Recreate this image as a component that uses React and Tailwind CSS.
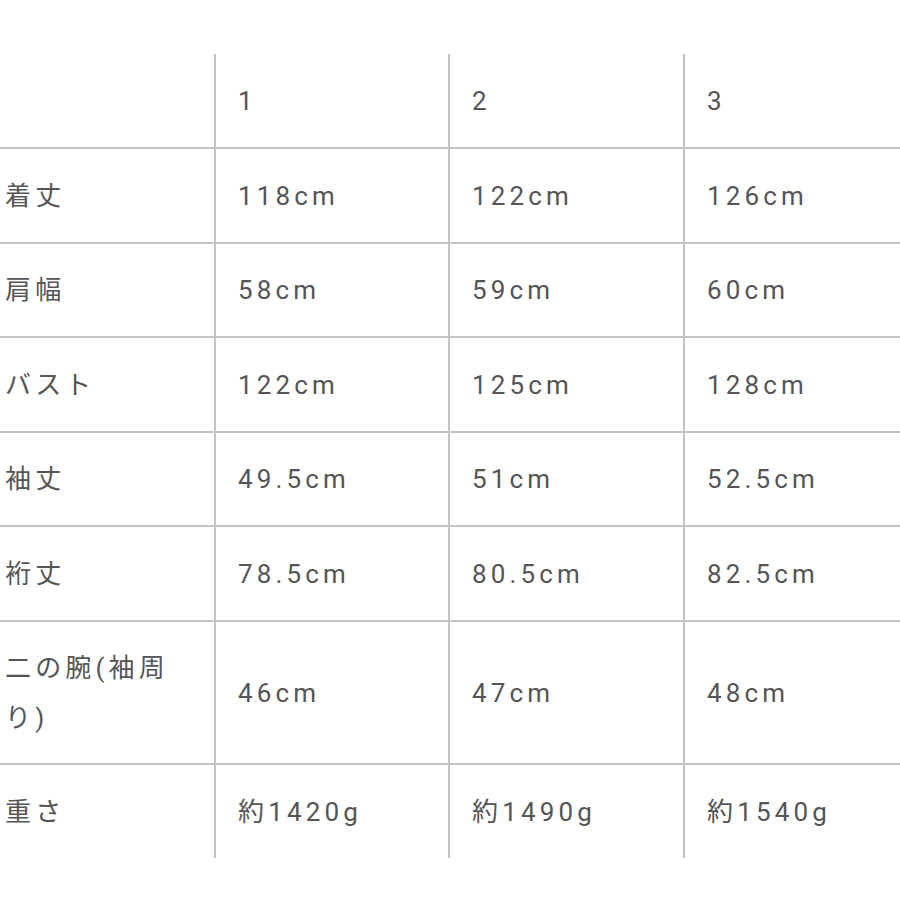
import React from 'react';

// サイズ表
const header = ['', '1', '2', '3'];

const rows = [
  { label: '着丈', values: ['118cm', '122cm', '126cm'], h: 'h-[95px]' },
  { label: '肩幅', values: ['58cm', '59cm', '60cm'], h: 'h-[94px]' },
  { label: 'バスト', values: ['122cm', '125cm', '128cm'], h: 'h-[95px]' },
  { label: '袖丈', values: ['49.5cm', '51cm', '52.5cm'], h: 'h-[94px]' },
  { label: '裄丈', values: ['78.5cm', '80.5cm', '82.5cm'], h: 'h-[95px]' },
  { label: '二の腕(袖周り)', values: ['46cm', '47cm', '48cm'], h: 'h-[143px]' },
  { label: '重さ', values: ['約1420g', '約1490g', '約1540g'], h: 'h-[95px]' },
];

const colW = ['w-[214px]', 'w-[234px]', 'w-[235px]', 'flex-1'];

const Cell = ({ i, children }) => (
  <div
    className={`${colW[i]} ${i === 0 ? 'pl-[5px] pr-[24px]' : 'border-l-2 border-[#c4c4c4] pl-[22px] pr-4'} flex items-center shrink-0`}
  >
    <span className="leading-[50px]">{children}</span>
  </div>
);

export default function App() {
  return (
    <div
      className="w-[900px] h-[900px] bg-white pt-[54px] overflow-hidden text-[26px] font-normal tracking-[0.16em] text-[#555555]"
      style={{ fontFamily: 'Roboto, "Noto Sans CJK JP", sans-serif' }}
    >
      <div className="flex h-[93px]">
        {header.map((t, i) => (
          <Cell key={i} i={i}>{t}</Cell>
        ))}
      </div>
      {rows.map((r) => (
        <div key={r.label} className={`flex ${r.h} border-t-2 border-[#c4c4c4]`}>
          <Cell i={0}>{r.label}</Cell>
          {r.values.map((v, i) => (
            <Cell key={i} i={i + 1}>{v}</Cell>
          ))}
        </div>
      ))}
    </div>
  );
}
